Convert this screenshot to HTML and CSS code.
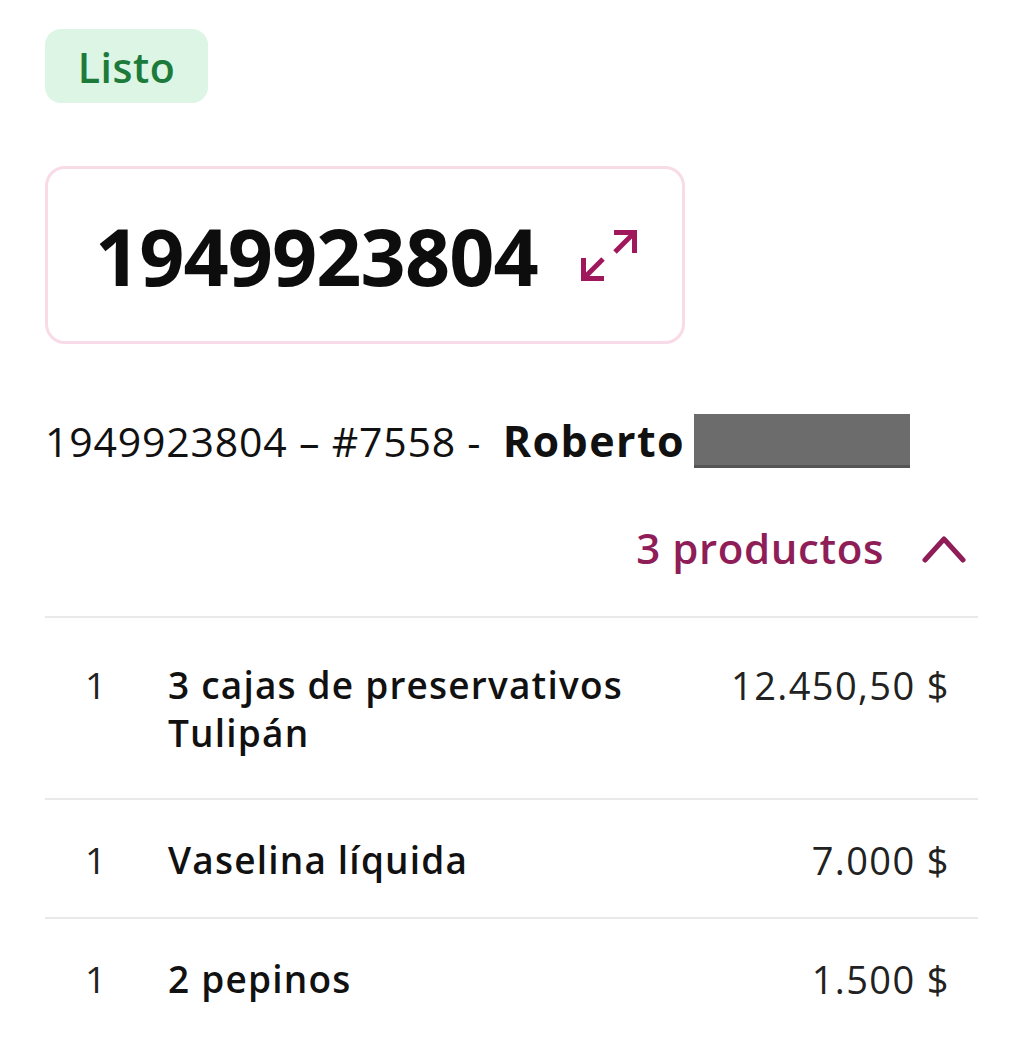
FILE: index.html
```html
<!DOCTYPE html>
<html lang="es">
<head>
    <meta charset="UTF-8">
    <meta name="viewport" content="width=device-width, initial-scale=1.0">
    <title>Pedido 1949923804</title>
    <link rel="stylesheet" href="styles.css">
</head>
<body>
    <div class="page">
        <span class="status">Listo</span>

        <div class="code-box">
            <span class="code">1949923804</span>
            <svg class="expand" width="56" height="54" viewBox="0 0 56 54" fill="none" stroke="currentColor" stroke-width="5" stroke-linecap="butt" stroke-linejoin="miter">
                <path d="M33 4.5H53.5V25" />
                <path d="M53 5L34 24" />
                <path d="M2.5 30V50.5H23" />
                <path d="M3 50L22 31" />
            </svg>
        </div>

        <div class="info">
            <span>1949923804 – #7558 - </span>
            <strong class="name">Roberto</strong>
            <span class="hidden-name"></span>
        </div>

        <div class="toggle">
            <span>3 productos</span>
            <svg class="chevron" width="46" height="32" viewBox="0 0 46 32" fill="none" stroke="currentColor" stroke-width="5" stroke-linecap="round" stroke-linejoin="round">
                <path d="M3 28L22 7L41 28" />
            </svg>
        </div>

        <ul class="items">
            <li class="item">
                <span class="qty">1</span>
                <span class="title">3 cajas de preservativos Tulipán</span>
                <span class="price">12.450,50 $</span>
            </li>
            <li class="item">
                <span class="qty">1</span>
                <span class="title">Vaselina líquida</span>
                <span class="price">7.000 $</span>
            </li>
            <li class="item">
                <span class="qty">1</span>
                <span class="title">2 pepinos</span>
                <span class="price">1.500 $</span>
            </li>
        </ul>
    </div>
</body>
</html>
```

FILE: styles.css
```css
body {
    margin: 0;
    background: #fff;
    color: #111;
    font-family: 'Open Sans', 'Noto Sans', sans-serif;
}

.page {
    display: flex;
    flex-direction: column;
    align-items: flex-start;
    padding: 29px 45px 0 45px;
}

.status {
    display: inline-block;
    box-sizing: border-box;
    width: 163px;
    height: 74px;
    line-height: 76px;
    text-align: center;
    background: #ddf5e4;
    color: #1c7a3b;
    border-radius: 16px;
    font-size: 41px;
    font-weight: 600;
    letter-spacing: 0.5px;
}

.code-box {
    margin-top: 63px;
    box-sizing: border-box;
    width: 640px;
    height: 178px;
    border: 3px solid #f8dbe7;
    border-radius: 20px;
    display: flex;
    align-items: center;
    padding-left: 47px;
}

.code {
    font-size: 79px;
    font-weight: 700;
    letter-spacing: -0.9px;
    color: #0d0d0d;
}

.expand {
    margin-left: 43px;
    color: #a0185c;
}

.info {
    margin-top: 67px;
    display: flex;
    align-items: center;
    font-size: 41px;
    letter-spacing: 0.8px;
    white-space: pre;
}

.name {
    margin-left: 10px;
    font-size: 43px;
    font-weight: 700;
    letter-spacing: 1.4px;
}

.hidden-name {
    display: inline-block;
    width: 216px;
    height: 54px;
    margin-left: 9px;
    background: #6c6c6c;
    border-bottom: 3px solid #555;
    box-sizing: border-box;
}

.toggle {
    align-self: stretch;
    margin-top: 49px;
    padding-right: 10px;
    display: flex;
    justify-content: flex-end;
    align-items: center;
    column-gap: 38px;
    color: #8e1d58;
    font-size: 42px;
    font-weight: 600;
    letter-spacing: 0.6px;
}

.items {
    align-self: stretch;
    list-style: none;
    margin: 40px 0 0 0;
    padding: 0;
    border-top: 2px solid #e9e9e9;
}

.item {
    display: grid;
    grid-template-columns: 83px 1fr auto;
    align-items: start;
    padding: 36px 28px 33px 40px;
    border-bottom: 2px solid #e9e9e9;
    font-size: 37px;
    line-height: 48px;
}

.item:first-child {
    padding-top: 43px;
    padding-bottom: 41px;
}

.item:last-child {
    border-bottom: none;
}

.qty {
    font-weight: 400;
    color: #222;
}

.title {
    font-weight: 600;
    letter-spacing: 1.2px;
    max-width: 490px;
}

.price {
    font-size: 38px;
    font-weight: 400;
    color: #222;
    letter-spacing: 1.4px;
    text-align: right;
}
```
